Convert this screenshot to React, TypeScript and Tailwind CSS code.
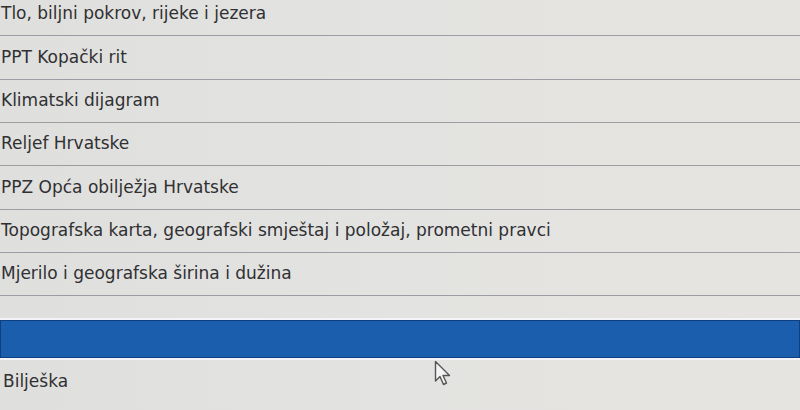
import React from 'react'

const ITEMS = [
  'Tlo, biljni pokrov, rijeke i jezera',
  'PPT Kopački rit',
  'Klimatski dijagram',
  'Reljef Hrvatske',
  'PPZ Opća obilježja Hrvatske',
  'Topografska karta, geografski smještaj i položaj, prometni pravci',
  'Mjerilo i geografska širina i dužina',
]

function Cursor() {
  return (
    <svg className="absolute left-[434px] top-[360px]" width="20" height="28" viewBox="0 0 20 28">
      <path
        d="M1.5 1.5 L1.5 21 L6 16.5 L9.5 24.5 L12.5 23 L9 15.5 L15.5 15.5 Z"
        fill="#f4f4f4"
        stroke="#555"
        strokeWidth="1.4"
        strokeLinejoin="round"
      />
    </svg>
  )
}

export default function App() {
  return (
    <div
      className="relative w-[800px] h-[410px] overflow-hidden bg-gradient-to-r from-[#dfdfdd] via-[#e3e3e1] to-[#e6e4e0] text-[#303033]"
      style={{ fontFamily: '"DejaVu Sans", Verdana, sans-serif' }}
    >
      <div className="-mt-[7px] flex flex-col">
        {ITEMS.map((item) => (
          <div key={item} className="h-[43.33px] flex items-center pl-[1px] border-b border-[#9c9ca2] text-[17px]">
            {item}
          </div>
        ))}
        <div className="h-[22px]" />
        <div className="h-[42px] bg-[#1b5eae] border-y-2 border-y-[#f2f4f8] shadow-[inset_0_0_0_1px_#0f3f7e]" />
        <div className="h-[42px] flex items-center pl-[3px] text-[17px]">Bilješka</div>
      </div>
      <Cursor />
    </div>
  )
}
